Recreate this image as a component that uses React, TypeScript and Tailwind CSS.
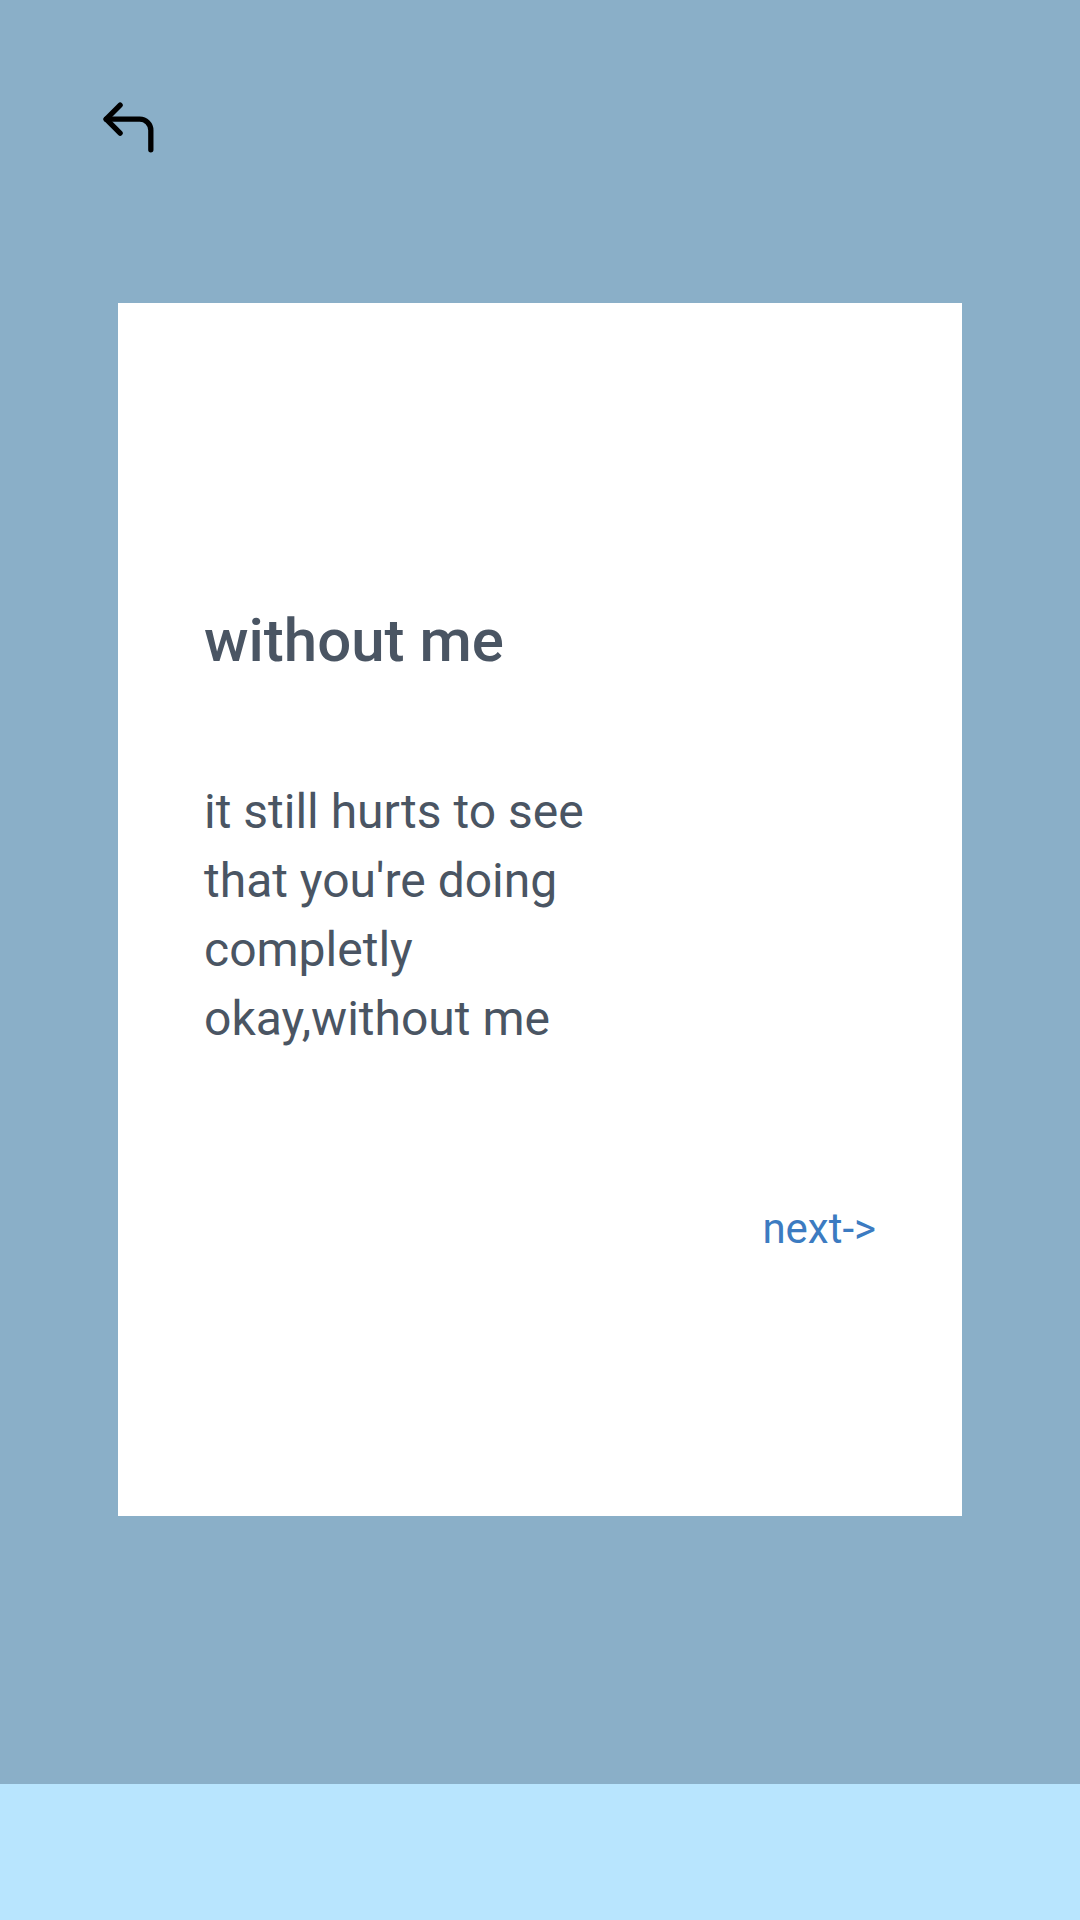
import React from "react";

export default function App() {
  return (
    <div className="w-[1080px] h-[1920px] flex flex-col bg-[#8aafc8]" style={{ fontFamily: "Roboto, 'Liberation Sans', sans-serif" }}>
      <div className="flex-1 flex flex-col">
        <div className="pt-[94px] pl-[95px] h-[303px]">
          <svg width="67" height="67" viewBox="0 0 24 24" fill="none" stroke="#000" strokeWidth="1.9" strokeLinecap="round" strokeLinejoin="round">
            <polyline points="9 14 4 9 9 4" />
            <path d="M20 20v-7a4 4 0 0 0-4-4H4" />
          </svg>
        </div>
        <div className="ml-[118px] w-[844px] h-[1213px] bg-white flex flex-col px-[86px] pt-[302px]">
          <h1 className="text-[60px] leading-[72px] font-medium text-[#4a5563]">without me</h1>
          <p className="mt-[100px] text-[48px] leading-[69px] text-[#4a5563]">
            it still hurts to see
            <br />
            that you're doing
            <br />
            completly
            <br />
            okay,without me
          </p>
          <div className="mt-[144px] flex justify-end">
            <span className="text-[42px] text-[#3c7bc1]">next-&gt;</span>
          </div>
        </div>
      </div>
      <div className="h-[136px] bg-[#b8e5fe]" />
    </div>
  );
}
